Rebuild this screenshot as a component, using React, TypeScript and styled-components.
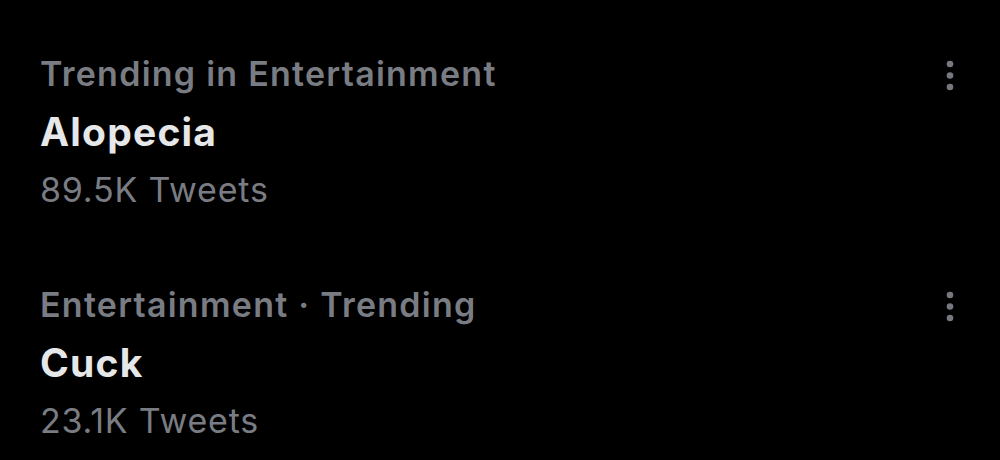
import React from "react";
import styled, { createGlobalStyle } from "styled-components";

const Global = createGlobalStyle`
  html, body { margin: 0; padding: 0; background: #000; }
  body { font-family: Inter, "Noto Sans", "Liberation Sans", sans-serif; -webkit-font-smoothing: antialiased; }
`;

const Page = styled.div`
  width: 1000px;
  height: 460px;
  background: #000;
  box-sizing: border-box;
  padding: 54px 0 0 40px;
  display: flex;
  flex-direction: column;
  gap: 75px;
  overflow: hidden;
`;

const Item = styled.div`
  display: flex;
  justify-content: space-between;
  align-items: flex-start;
  padding-right: 45px;
`;

const Texts = styled.div`
  display: flex;
  flex-direction: column;
`;

const Context = styled.div`
  font-size: 34px;
  line-height: 40px;
  font-weight: 600;
  color: #797d83;
  letter-spacing: 1.25px;
`;

const Name = styled.div`
  margin-top: 15px;
  font-size: 39px;
  line-height: 46px;
  font-weight: 700;
  color: #e6e7e8;
  letter-spacing: 1.2px;
`;

const Count = styled.div`
  margin-top: 15px;
  font-size: 34px;
  line-height: 40px;
  font-weight: 400;
  color: #797d83;
  letter-spacing: 0.8px;
`;

const More = styled.svg`
  margin-top: 6px;
  width: 10px;
  height: 32px;
  flex-shrink: 0;
`;

const MoreIcon = () => (
  <More viewBox="0 0 10 32">
    <circle cx="5" cy="4" r="3.3" fill="#75797f" />
    <circle cx="5" cy="15.5" r="3.3" fill="#75797f" />
    <circle cx="5" cy="27" r="3.3" fill="#75797f" />
  </More>
);

const trends = [
  { context: "Trending in Entertainment", name: "Alopecia", count: "89.5K Tweets" },
  { context: "Entertainment · Trending", name: "Cuck", count: "23.1K Tweets" },
];

export default function App() {
  return (
    <>
      <Global />
      <Page>
        {trends.map((t) => (
          <Item key={t.name}>
            <Texts>
              <Context>{t.context}</Context>
              <Name>{t.name}</Name>
              <Count>{t.count}</Count>
            </Texts>
            <MoreIcon />
          </Item>
        ))}
      </Page>
    </>
  );
}
